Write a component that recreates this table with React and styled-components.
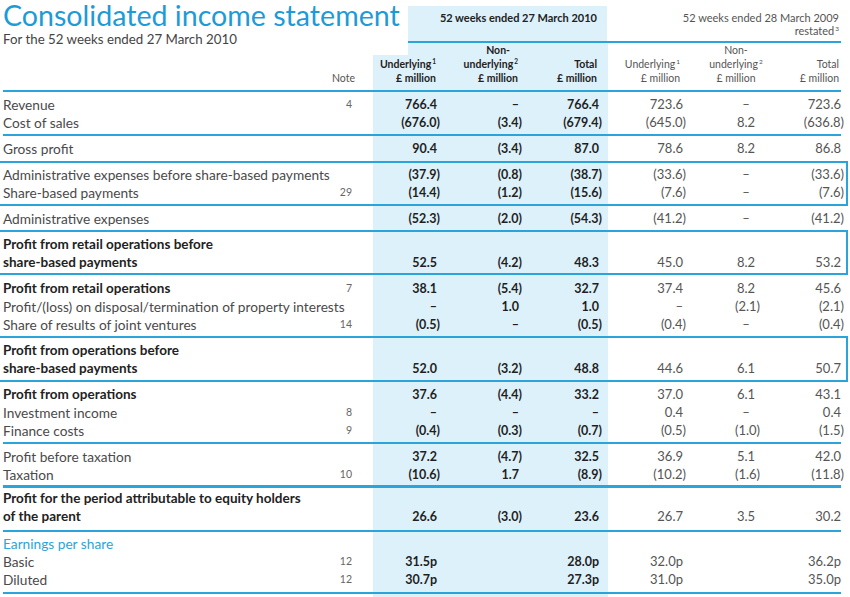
import React from "react";
import styled, { createGlobalStyle, css } from "styled-components";

const BLUE = "#2aa4da";
const SHADE = "#ddf1fb";
const COLS = "327px 43px 67px 81px 87px 100px 76px 57px";

const GlobalStyle = createGlobalStyle`
  html, body { margin: 0; padding: 0; background: #fff; }
  body { font-family: Lato, "Liberation Sans", sans-serif; }
`;

const Page = styled.div`
  width: 850px;
  height: 597px;
  overflow: hidden;
  box-sizing: border-box;
  padding-left: 3px;
`;

const TopBar = styled.div`
  display: flex;
  width: 838px;
  height: 43px;
`;

const TitleBlock = styled.div`
  flex: none;
  width: 405px;
  white-space: nowrap;
`;

const Title = styled.h1`
  margin: 0;
  font-size: 28.6px;
  line-height: 31px;
  font-weight: 400;
  color: #1d9bd7;
`;

const Subtitle = styled.div`
  font-size: 13.3px;
  line-height: 16px;
  color: #444;
`;

const Periods = styled.div`
  flex: 1;
  display: flex;
  border-bottom: 2px solid ${BLUE};
`;

const CurrentPeriod = styled.div`
  width: 199px;
  margin-top: 6px;
  padding: 4.5px 10px 0 0;
  box-sizing: border-box;
  background: ${SHADE};
  text-align: right;
  font-size: 11px;
  line-height: 13px;
  font-weight: 700;
  color: #222;
`;

const PriorPeriod = styled.div`
  flex: 1;
  padding: 10.5px 2px 0 0;
  text-align: right;
  font-size: 11px;
  line-height: 13px;
  color: #555;
`;

const Table = styled.div`
  width: 838px;
  padding-bottom: 10px;
  background:
    linear-gradient(${SHADE}, ${SHADE}) 405px 0 / 200px 100% no-repeat,
    linear-gradient(${SHADE}, ${SHADE}) 370px 12px / 35px 100% no-repeat;
`;

const HeadRow = styled.div`
  display: grid;
  grid-template-columns: ${COLS};
  align-items: end;
  height: 49px;
  box-sizing: border-box;
  padding-bottom: 5px;
  border-bottom: 2px solid ${BLUE};
`;

const HeadCell = styled.div`
  font-size: 10.5px;
  line-height: 14px;
  text-align: ${(p) => p.$align || "right"};
  padding-right: ${(p) => p.$pr}px;
  font-weight: ${(p) => (p.$current ? 700 : 400)};
  color: ${(p) => (p.$current ? "#222" : "#555")};
  white-space: nowrap;
`;

const HeadLine = styled.div`
  padding-right: ${(p) => p.$inset || 0}px;
`;

const Sup = styled.sup`
  font-size: 6.5px;
  line-height: 0;
  vertical-align: 4px;
  margin-left: 1px;
`;

const Section = styled.div`
  padding-top: ${(p) => p.$pt}px;
  padding-bottom: ${(p) => p.$pb}px;
  border-top: ${(p) => (p.$rule ? `${p.$rule}px solid ${BLUE}` : "none")};
  border-bottom: ${(p) => (p.$closing ? `2px solid ${BLUE}` : "none")};
  ${(p) =>
    p.$boxed &&
    css`
      margin: 0 -7px 0 -3px;
      padding-left: 3px;
      padding-right: 5px;
      border: 2px solid ${BLUE};
      border-left: none;
    `}
`;

const Row = styled.div`
  display: grid;
  grid-template-columns: ${COLS};
  align-items: center;
  height: 18px;
`;

const Label = styled.div`
  font-size: ${(p) => (p.$bold ? 13.5 : 13.7)}px;
  font-weight: ${(p) => (p.$bold ? 700 : 400)};
  color: ${(p) => (p.$blue ? BLUE : p.$bold ? "#222" : "#4a4a4a")};
  white-space: nowrap;
`;

const Note = styled.div`
  font-size: 10.5px;
  color: #666;
  text-align: right;
  padding-right: 21px;
`;

const Num = styled.div`
  font-size: ${(p) => (p.$current ? 12.5 : 13)}px;
  font-weight: ${(p) => (p.$current ? 700 : 400)};
  color: ${(p) => (p.$current ? "#1f1f1f" : "#555")};
  text-align: ${(p) => p.$align};
  padding-right: ${(p) => p.$pr}px;
  white-space: nowrap;
`;

const Close = styled.span`
  margin-right: -3px;
`;

const NUM_COLS = [
  { pr: 3, align: "right", current: true },
  { pr: 2, align: "right", current: true },
  { pr: 9, align: "right", current: true },
  { pr: 25, align: "right" },
  { pr: 0, align: "center" },
  { pr: 0, align: "right" },
];

const HEADS = [
  { lines: [["Underlying", "1"], ["£ million"]], pr: 4, current: true },
  { lines: [["Non-", null, 8], ["underlying", "2"], ["£ million"]], pr: 3, current: true },
  { lines: [["Total"], ["£ million"]], pr: 11, current: true },
  { lines: [["Underlying", "1"], ["£ million"]], pr: 28 },
  { lines: [["Non-"], ["underlying", "2"], ["£ million"]], pr: 20, align: "center" },
  { lines: [["Total"], ["£ million"]], pr: 2 },
];

const SECTIONS = [
  {
    pt: 3, pb: 3,
    rows: [
      ["Revenue", "4", "766.4", "–", "766.4", "723.6", "–", "723.6"],
      ["Cost of sales", "", "(676.0)", "(3.4)", "(679.4)", "(645.0)", "8.2", "(636.8)"],
    ],
  },
  {
    rule: 2, pt: 3, pb: 4,
    rows: [["Gross profit", "", "90.4", "(3.4)", "87.0", "78.6", "8.2", "86.8"]],
  },
  {
    boxed: true, pt: 2, pb: 3,
    rows: [
      ["Administrative expenses before share-based payments", "", "(37.9)", "(0.8)", "(38.7)", "(33.6)", "–", "(33.6)"],
      ["Share-based payments", "29", "(14.4)", "(1.2)", "(15.6)", "(7.6)", "–", "(7.6)"],
    ],
  },
  {
    pt: 3, pb: 3,
    rows: [["Administrative expenses", "", "(52.3)", "(2.0)", "(54.3)", "(41.2)", "–", "(41.2)"]],
  },
  {
    boxed: true, pt: 3, pb: 2, bold: true,
    rows: [
      ["Profit from retail operations before"],
      ["share-based payments", "", "52.5", "(4.2)", "48.3", "45.0", "8.2", "53.2"],
    ],
  },
  {
    pt: 4, pb: 3,
    rows: [
      ["Profit from retail operations", "7", "38.1", "(5.4)", "32.7", "37.4", "8.2", "45.6", true],
      ["Profit/(loss) on disposal/termination of property interests", "", "–", "1.0", "1.0", "–", "(2.1)", "(2.1)"],
      ["Share of results of joint ventures", "14", "(0.5)", "–", "(0.5)", "(0.4)", "–", "(0.4)"],
    ],
  },
  {
    boxed: true, pt: 3, pb: 3, bold: true,
    rows: [
      ["Profit from operations before"],
      ["share-based payments", "", "52.0", "(3.2)", "48.8", "44.6", "6.1", "50.7"],
    ],
  },
  {
    pt: 3, pb: 3,
    rows: [
      ["Profit from operations", "", "37.6", "(4.4)", "33.2", "37.0", "6.1", "43.1", true],
      ["Investment income", "8", "–", "–", "–", "0.4", "–", "0.4"],
      ["Finance costs", "9", "(0.4)", "(0.3)", "(0.7)", "(0.5)", "(1.0)", "(1.5)"],
    ],
  },
  {
    rule: 2, pt: 3, pb: 2,
    rows: [
      ["Profit before taxation", "", "37.2", "(4.7)", "32.5", "36.9", "5.1", "42.0"],
      ["Taxation", "10", "(10.6)", "1.7", "(8.9)", "(10.2)", "(1.6)", "(11.8)"],
    ],
  },
  {
    rule: 3, pt: 1, pb: 5, bold: true,
    rows: [
      ["Profit for the period attributable to equity holders"],
      ["of the parent", "", "26.6", "(3.0)", "23.6", "26.7", "3.5", "30.2"],
    ],
  },
  {
    rule: 2, pt: 2, pb: 4, closing: true,
    rows: [
      ["Earnings per share", "", "", "", "", "", "", "", false, true],
      ["Basic", "12", "31.5p", "", "28.0p", "32.0p", "", "36.2p"],
      ["Diluted", "12", "30.7p", "", "27.3p", "31.0p", "", "35.0p"],
    ],
  },
];

const Value = ({ v }) =>
  v && v.endsWith(")") ? (
    <>
      {v.slice(0, -1)}
      <Close>)</Close>
    </>
  ) : (
    v || null
  );

const StatementRow = ({ row, bold }) => {
  const [label, note, ...rest] = row;
  const values = rest.slice(0, 6);
  const rowBold = bold || rest[6];
  const blue = rest[7];
  return (
    <Row>
      <Label $bold={rowBold} $blue={blue}>
        {label}
      </Label>
      <Note>{note}</Note>
      {NUM_COLS.map((c, i) => (
        <Num key={i} $pr={c.pr} $align={c.align} $current={c.current}>
          <Value v={values[i]} />
        </Num>
      ))}
    </Row>
  );
};

export default function App() {
  return (
    <Page>
      <GlobalStyle />
      <TopBar>
        <TitleBlock>
          <Title>Consolidated income statement</Title>
          <Subtitle>For the 52 weeks ended 27 March 2010</Subtitle>
        </TitleBlock>
        <Periods>
          <CurrentPeriod>52 weeks ended 27 March 2010</CurrentPeriod>
          <PriorPeriod>
            52 weeks ended 28 March 2009
            <br />
            restated<Sup>3</Sup>
          </PriorPeriod>
        </Periods>
      </TopBar>
      <Table>
        <HeadRow>
          <div />
          <HeadCell $pr={18}>Note</HeadCell>
          {HEADS.map((h, i) => (
            <HeadCell key={i} $pr={h.pr} $align={h.align} $current={h.current}>
              {h.lines.map(([text, sup, inset], j) => (
                <HeadLine key={j} $inset={inset}>
                  {text}
                  {sup && <Sup>{sup}</Sup>}
                </HeadLine>
              ))}
            </HeadCell>
          ))}
        </HeadRow>
        {SECTIONS.map((s, i) => (
          <Section
            key={i}
            $pt={s.pt}
            $pb={s.pb}
            $rule={s.rule}
            $boxed={s.boxed}
            $closing={s.closing}
          >
            {s.rows.map((r, j) => (
              <StatementRow key={j} row={r} bold={s.bold} />
            ))}
          </Section>
        ))}
      </Table>
    </Page>
  );
}
